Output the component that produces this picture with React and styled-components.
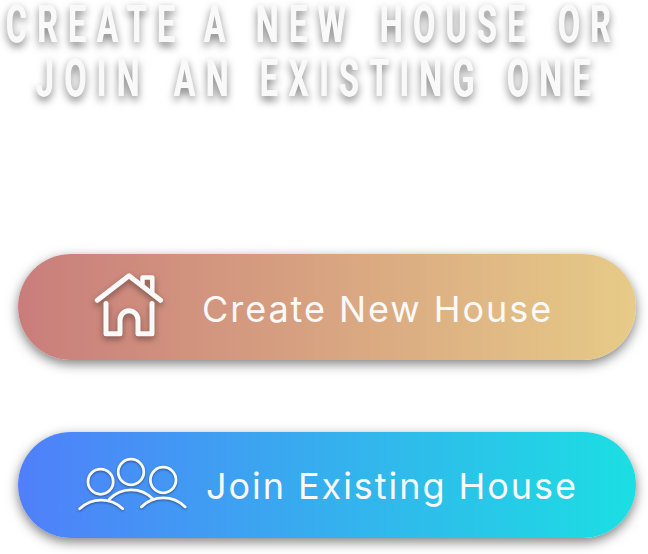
import React from "react";
import styled, { createGlobalStyle } from "styled-components";

const GlobalStyle = createGlobalStyle`
  body { margin: 0; background: #fff; overflow: hidden; }
`;

const Page = styled.main`
  box-sizing: border-box;
  width: 648px;
  height: 554px;
  overflow: hidden;
  display: flex;
  flex-direction: column;
`;

const Heading = styled.h1`
  margin: -2px 0 0;
  height: 256px;
  flex: none;
  font: 600 51.5px/54px Roboto, sans-serif;
  color: #f9f9f9;
`;

const Line = styled.span`
  display: flex;
  height: 54px;
`;

const Word = styled.span`
  flex: none;
  width: ${(p) => p.$width}px;
  margin-left: ${(p) => p.$gap}px;
  white-space: nowrap;
  letter-spacing: 17.5px;
  transform: scaleX(0.615);
  transform-origin: left;
  text-shadow: 0.8px 0 0 #f9f9f9, -0.8px 0 0 #f9f9f9,
    0 4px 11px rgba(0, 0, 0, 0.6);
`;

const Actions = styled.div`
  display: flex;
  flex-direction: column;
  gap: 72px;
  padding-left: 18px;
`;

const ActionButton = styled.button`
  display: flex;
  align-items: center;
  box-sizing: border-box;
  width: 618px;
  height: 106px;
  padding: 0;
  border: 0;
  border-radius: 53px;
  background: linear-gradient(90deg, ${(p) => p.$from}, ${(p) => p.$to});
  box-shadow: 0 4px 12px rgba(0, 0, 0, 0.5);
  color: #f9f9f9;
  text-align: left;
`;

const Icon = styled.svg`
  flex: none;
  width: 186px;
  height: 106px;
  fill: none;
  stroke: #f9f9f9;
  stroke-linecap: round;
  stroke-linejoin: round;
  filter: drop-shadow(0 ${(p) => p.$drop}px ${(p) => p.$drop}px rgba(0, 0, 0, 0.4));
`;

const Label = styled.span`
  font: 400 36px/44px Inter, sans-serif;
  letter-spacing: 1.95px;
  margin: ${(p) => p.$margin};
  white-space: nowrap;
`;

function HouseIcon() {
  return (
    <Icon viewBox="18 254 186 106" strokeWidth="5" $drop={3}>
      <path d="M97.3 300.3 129 275.8l31.5 24.5" />
      <path d="M142.5 284v-6.5h9.8v15" strokeWidth="4.5" />
      <path d="M106 303.5V333.8h14V320a9 9.2 0 0 1 18 0v13.8h14V303.5" />
    </Icon>
  );
}

function PeopleIcon() {
  return (
    <Icon viewBox="18 432 186 106" strokeWidth="2.8" $drop={1}>
      <circle cx="100.6" cy="481.7" r="12.6" />
      <circle cx="131" cy="472" r="12.8" />
      <circle cx="163.2" cy="480" r="12.8" />
      <path d="M79.7 508.7a31 31 0 0 1 43 0" />
      <path d="M109.3 499.2a30.5 30.5 0 0 1 43.6-.3" />
      <path d="M141.4 507a31 31 0 0 1 43.8 0" />
    </Icon>
  );
}

export default function App() {
  return (
    <Page>
      <GlobalStyle />
      <Heading>
        <Line>
          <Word $gap={6} $width={168}>CREATE</Word>
          <Word $gap={30} $width={20}>A</Word>
          <Word $gap={32} $width={92}>NEW</Word>
          <Word $gap={32} $width={147}>HOUSE</Word>
          <Word $gap={31} $width={54}>OR</Word>
        </Line>
        <Line>
          <Word $gap={36} $width={105}>JOIN</Word>
          <Word $gap={33} $width={54}>AN</Word>
          <Word $gap={32} $width={216}>EXISTING</Word>
          <Word $gap={31} $width={84}>ONE</Word>
        </Line>
      </Heading>
      <Actions>
        <ActionButton $from="#c97d7b" $to="#e7cb87">
          <HouseIcon />
          <Label $margin="4px 0 0 -2px">Create New House</Label>
        </ActionButton>
        <ActionButton $from="#507ffa" $to="#1bdfe2">
          <PeopleIcon />
          <Label $margin="1px 0 0 2px">Join Existing House</Label>
        </ActionButton>
      </Actions>
    </Page>
  );
}
